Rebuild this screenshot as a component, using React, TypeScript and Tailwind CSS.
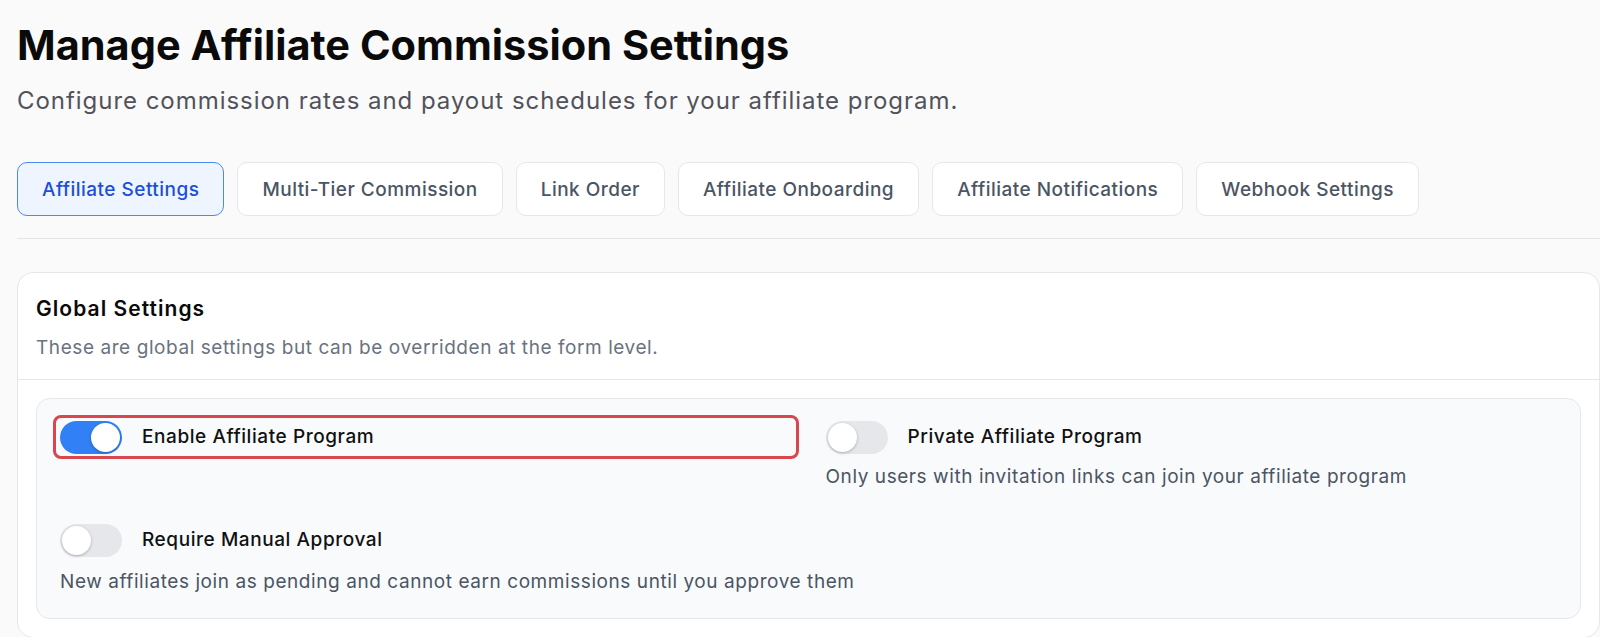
import React from "react";

const tabs = [
  "Affiliate Settings",
  "Multi-Tier Commission",
  "Link Order",
  "Affiliate Onboarding",
  "Affiliate Notifications",
  "Webhook Settings",
];

function Toggle({ on }: { on: boolean }) {
  return (
    <div
      className={
        on
          ? "relative h-[33px] w-[62px] shrink-0 rounded-full bg-[#3180f6]"
          : "relative h-[33px] w-[62px] shrink-0 rounded-full bg-[#e5e7eb]"
      }
    >
      <div
        className={
          on
            ? "absolute right-[2px] top-[2px] h-[29px] w-[29px] rounded-full bg-white shadow-[0_1px_3px_rgba(0,0,0,0.25)]"
            : "absolute left-[2px] top-[2px] h-[29px] w-[29px] rounded-full bg-white shadow-[0_1px_3px_rgba(0,0,0,0.25)]"
        }
      />
    </div>
  );
}

function Setting({
  label,
  desc,
  on,
  highlight,
  wide,
}: {
  label: string;
  desc?: string;
  on: boolean;
  highlight?: boolean;
  wide?: boolean;
}) {
  return (
    <div className={wide ? "col-span-2 flex flex-col" : "flex flex-col"}>
      <div
        className={
          highlight
            ? "flex h-[44px] items-center gap-5 rounded-lg border-[3px] border-[#d9464d] px-1"
            : "flex h-[44px] items-center gap-5 rounded-lg border-[3px] border-transparent px-1"
        }
      >
        <Toggle on={on} />
        <span className="text-[19px] font-medium leading-7 tracking-[0.03em] text-[#111111]">
          {label}
        </span>
      </div>
      {desc ? (
        <p
          className={
            wide
              ? "mt-[6px] pl-[7px] text-[19px] leading-7 tracking-[0.03em] text-[#4b5563]"
              : "mt-1 pl-[7px] text-[19px] leading-7 tracking-[0.03em] text-[#4b5563]"
          }
        >
          {desc}
        </p>
      ) : null}
    </div>
  );
}

export default function App() {
  return (
    <div
      className="min-h-screen overflow-hidden bg-[#fafafa] pl-[17px]"
      style={{ fontFamily: "Inter, 'Noto Sans', sans-serif" }}
    >
      <h1 className="pt-[21px] text-[41.5px] font-bold leading-[48px] text-[#0a0a0a]">
        Manage Affiliate Commission Settings
      </h1>
      <p className="mt-4 text-[24px] leading-8 tracking-[0.04em] text-[#52525b]">
        Configure commission rates and payout schedules for your affiliate program.
      </p>

      <div className="mt-[45px] flex gap-[13px] border-b border-[#e4e4e7] pb-[22px]">
        {tabs.map((t, i) => (
          <div
            key={t}
            className={
              i === 0
                ? "flex h-[54px] items-center rounded-[10px] border border-[#4a8ae8] bg-[#eef5ff] px-6 pt-[2px] text-[19px] font-medium tracking-[0.025em] text-[#1d4ed8]"
                : "flex h-[54px] items-center rounded-[10px] border border-[#e5e7eb] bg-white px-6 pt-[2px] text-[19px] font-medium tracking-[0.025em] text-[#4b5563]"
            }
          >
            {t}
          </div>
        ))}
      </div>

      <div className="mt-[33px] rounded-2xl border border-[#e5e7eb] bg-white">
        <div className="border-b border-[#e5e7eb] px-[18px] pb-[17px] pt-[22px]">
          <h2 className="text-[21px] font-semibold leading-7 tracking-[0.05em] text-[#0a0a0a]">
            Global Settings
          </h2>
          <p className="mt-[11px] text-[19px] leading-7 tracking-[0.03em] text-[#6b7280]">
            These are global settings but can be overridden at the form level.
          </p>
        </div>
        <div className="px-[18px] pb-[18px] pt-[18px]">
          <div className="grid grid-cols-2 gap-x-5 gap-y-[27px] rounded-[14px] border border-[#e5e7eb] bg-[#f8fafc] px-4 pb-[22px] pt-4">
            <Setting label="Enable Affiliate Program" on highlight />
            <Setting
              label="Private Affiliate Program"
              on={false}
              desc="Only users with invitation links can join your affiliate program"
            />
            <Setting
              label="Require Manual Approval"
              on={false}
              wide
              desc="New affiliates join as pending and cannot earn commissions until you approve them"
            />
          </div>
        </div>
      </div>
    </div>
  );
}
